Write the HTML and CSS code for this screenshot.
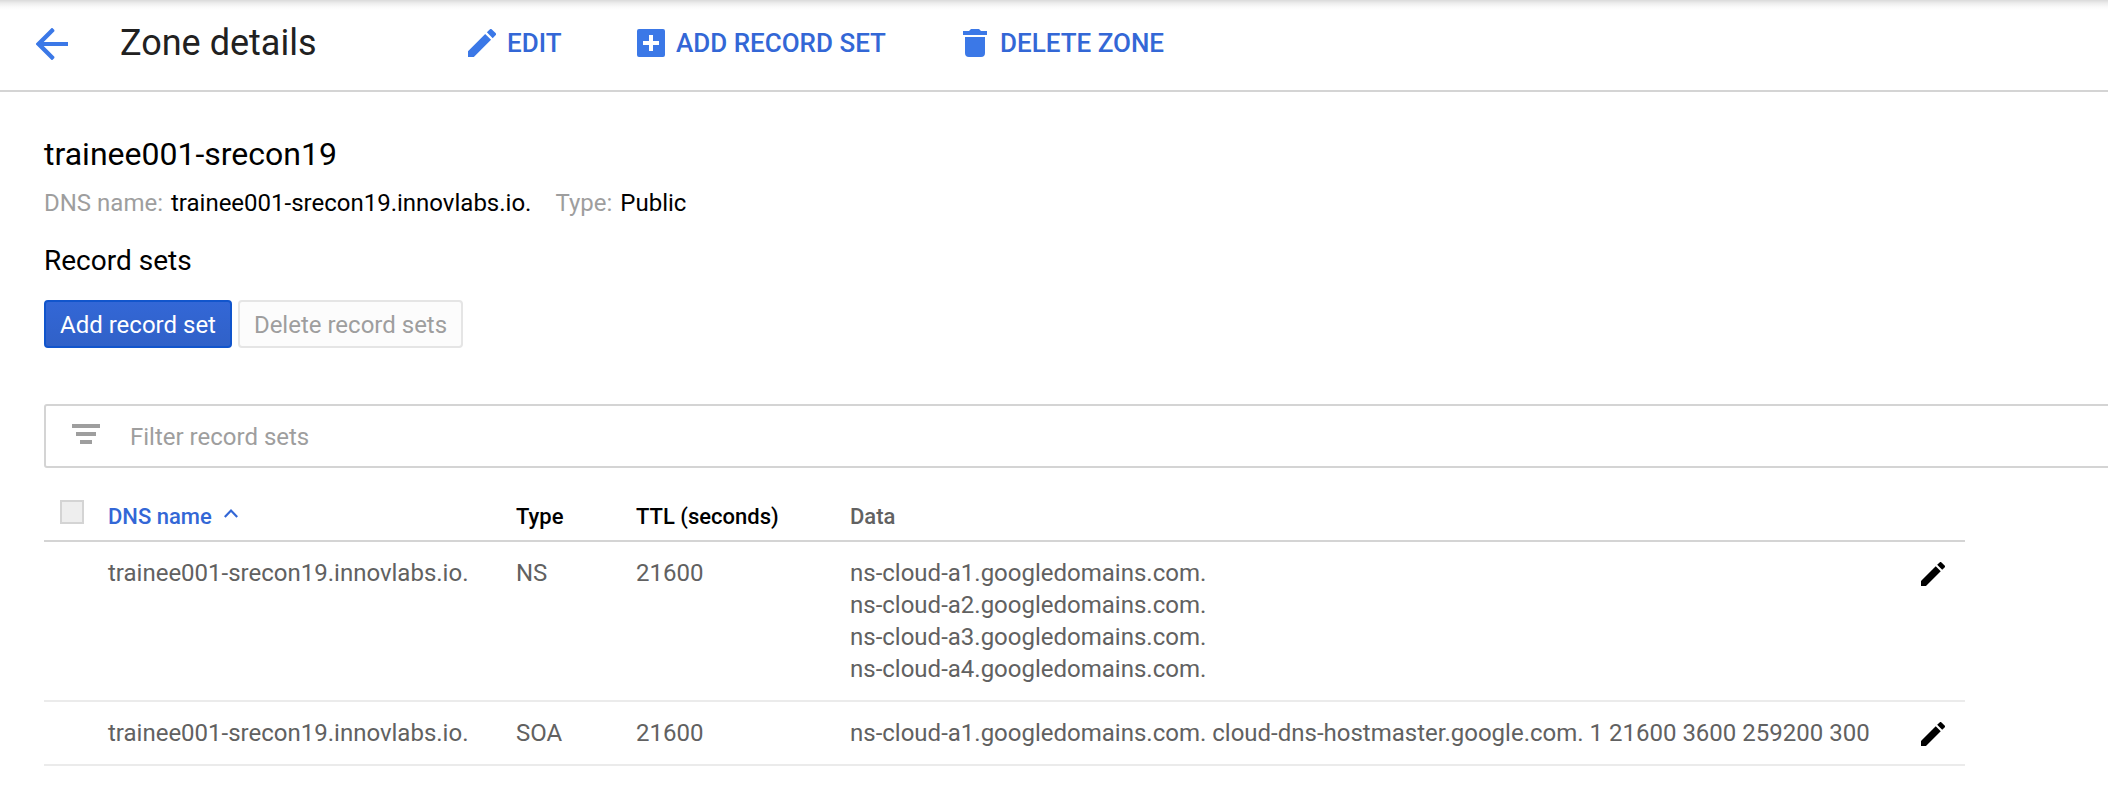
FILE: index.html
```html
<!DOCTYPE html>
<html lang="en">
<head>
<meta charset="utf-8">
<title>Zone details</title>
<link rel="stylesheet" href="styles.css">
</head>
<body>
<header class="bar">
  <svg class="back" viewBox="0 0 32 32"><path d="M32 14H7.700L18.400 3.200V2L16.400 0 15.600 0 0 15.400v1.200L15.600 32h.8l2-2v-1.200L7.700 18H32z"/></svg>
  <h1 class="title">Zone details</h1>
  <a class="action edit"><svg class="icon" viewBox="3 3 18 18"><path d="M3 17.250V21h3.750L17.810 9.940l-3.750-3.750L3 17.250zM20.710 7.040a1 1 0 0 0 0-1.410l-2.340-2.340a1 1 0 0 0-1.410 0l-1.830 1.830 3.750 3.750 1.830-1.830z"/></svg><span>EDIT</span></a>
  <a class="action add"><svg class="icon" viewBox="0 0 28 28"><path fill-rule="evenodd" d="M2 0H26a2 2 0 0 1 2 2V26a2 2 0 0 1-2 2H2a2 2 0 0 1-2-2V2A2 2 0 0 1 2 0zM12 6v6H6v4h6v6h4v-6h6v-4h-6V6z"/></svg><span>ADD RECORD SET</span></a>
  <a class="action delete"><svg class="icon trash" viewBox="0 0 24 28"><path d="M0 2h6l2-2h8l2 2h6v4H0zM2 8h20v16a4 4 0 0 1-4 4H6a4 4 0 0 1-4-4z"/></svg><span>DELETE ZONE</span></a>
</header>
<main class="content">
  <h2 class="zone">trainee001-srecon19</h2>
  <p class="meta"><span class="label">DNS name:</span><span class="value">trainee001-srecon19.innovlabs.io.</span><span class="label">Type:</span><span class="value">Public</span></p>
  <h3 class="section">Record sets</h3>
  <div class="buttons">
    <button class="btn primary">Add record set</button>
    <button class="btn disabled">Delete record sets</button>
  </div>
  <div class="filter">
    <svg class="filter-icon" viewBox="0 0 28 20"><path d="M0 0h28v4H0zM4 8h20v4H4zM8 16h12v4H8z"/></svg>
    <span>Filter record sets</span>
  </div>
  <div class="table">
    <div class="row head">
      <span class="check"></span>
      <span class="sorted">DNS name<svg class="caret" viewBox="0 0 14 9"><path d="M.8 8 7 1.600 13.200 8"/></svg></span>
      <span>Type</span>
      <span>TTL (seconds)</span>
      <span class="muted">Data</span>
    </div>
    <div class="row">
      <span></span>
      <span>trainee001-srecon19.innovlabs.io.</span>
      <span>NS</span>
      <span>21600</span>
      <span>ns-cloud-a1.googledomains.com.<br>ns-cloud-a2.googledomains.com.<br>ns-cloud-a3.googledomains.com.<br>ns-cloud-a4.googledomains.com.</span>
      <svg class="pencil" viewBox="3 3 18 18"><path d="M3 17.250V21h3.750L17.810 9.940l-3.750-3.750L3 17.250zM20.710 7.040a1 1 0 0 0 0-1.410l-2.340-2.340a1 1 0 0 0-1.410 0l-1.830 1.830 3.750 3.750 1.830-1.830z"/></svg>
    </div>
    <div class="row">
      <span></span>
      <span>trainee001-srecon19.innovlabs.io.</span>
      <span>SOA</span>
      <span>21600</span>
      <span>ns-cloud-a1.googledomains.com. cloud-dns-hostmaster.google.com. 1 21600 3600 259200 300</span>
      <svg class="pencil" viewBox="3 3 18 18"><path d="M3 17.250V21h3.750L17.810 9.940l-3.750-3.750L3 17.250zM20.710 7.040a1 1 0 0 0 0-1.410l-2.340-2.340a1 1 0 0 0-1.410 0l-1.830 1.830 3.750 3.750 1.830-1.830z"/></svg>
    </div>
  </div>
</main>
</body>
</html>
```
FILE: styles.css
```css
* { box-sizing: border-box; }
body {
  margin: 0;
  height: 790px;
  overflow: hidden;
  background: #fff;
  color: #000;
  font: 24px/32px Roboto, sans-serif;
}
h1, h2, h3, p { margin: 0; font-weight: 400; }
.bar {
  display: flex;
  align-items: flex-start;
  height: 92px;
  padding-left: 36px;
  border-bottom: 2px solid #d4d4d4;
  background: linear-gradient(#dadada, #ececec 3px, #fafafa 7px, #fff 10px);
}
.back { width: 32px; height: 32px; margin-top: 28px; fill: #3b78e7; }
.title {
  width: 348px;
  margin: 23px 0 0 52px;
  color: #212121;
  font-size: 36px;
  line-height: 40px;
}
.action {
  display: flex;
  margin-top: 27px;
  gap: 11px;
  color: #3367d6;
  font-size: 26px;
  font-weight: 500;
  white-space: nowrap;
}
.action.edit { width: 169px; }
.action.add { width: 326px; }
.action.delete { gap: 13px; }
.icon { width: 28px; height: 28px; margin-top: 2px; fill: #3b78e7; }
.trash { width: 24px; }
.content { padding-left: 44px; }
.zone { padding-top: 42px; font-size: 32px; line-height: 40px; }
.meta { display: flex; margin-top: 13px; }
.label { color: #9e9e9e; margin-right: 8px; }
.value { margin-right: 24px; }
.section { margin-top: 26px; font-size: 28px; line-height: 32px; }
.buttons { display: flex; gap: 6px; margin-top: 23px; }
.btn {
  height: 48px;
  padding: 2px 0 0;
  border: 2px solid #e5e5e5;
  border-radius: 4px;
  background: #fcfcfc;
  color: #9e9e9e;
  font: inherit;
}
.primary {
  width: 188px;
  border-color: #1155cc;
  background: linear-gradient(#3367d6, #3061c8);
  color: #fff;
}
.disabled { width: 225px; }
.filter {
  display: flex;
  height: 64px;
  margin: 56px -4px 0 0;
  padding: 15px 0 0 26px;
  border: 2px solid #d4d4d4;
  border-radius: 3px;
  color: #9e9e9e;
}
.filter-icon { width: 28px; height: 20px; margin: 3px 30px 0 0; fill: #9e9e9e; }
.table { width: 1921px; }
.row {
  display: grid;
  grid-template-columns: 64px 408px 120px 214px 1071px 24px;
  padding: 15px 0;
  border-bottom: 2px solid #ebebeb;
  color: #616161;
  white-space: nowrap;
}
.head {
  height: 74px;
  padding: 33px 0 0;
  border-color: #d4d4d4;
  color: #000;
  font-size: 22px;
  font-weight: 500;
}
.check {
  width: 24px;
  height: 24px;
  margin: -1px 0 0 16px;
  border: 2px solid #d4d4d4;
  background: #eee;
}
.sorted { color: #3367d6; }
.muted { color: #616161; }
.caret {
  width: 14px;
  height: 9px;
  margin: 0 0 6px 12px;
  fill: none;
  stroke: #3367d6;
  stroke-width: 2.200;
}
.pencil { width: 24px; height: 24px; margin-top: 5px; }
```
